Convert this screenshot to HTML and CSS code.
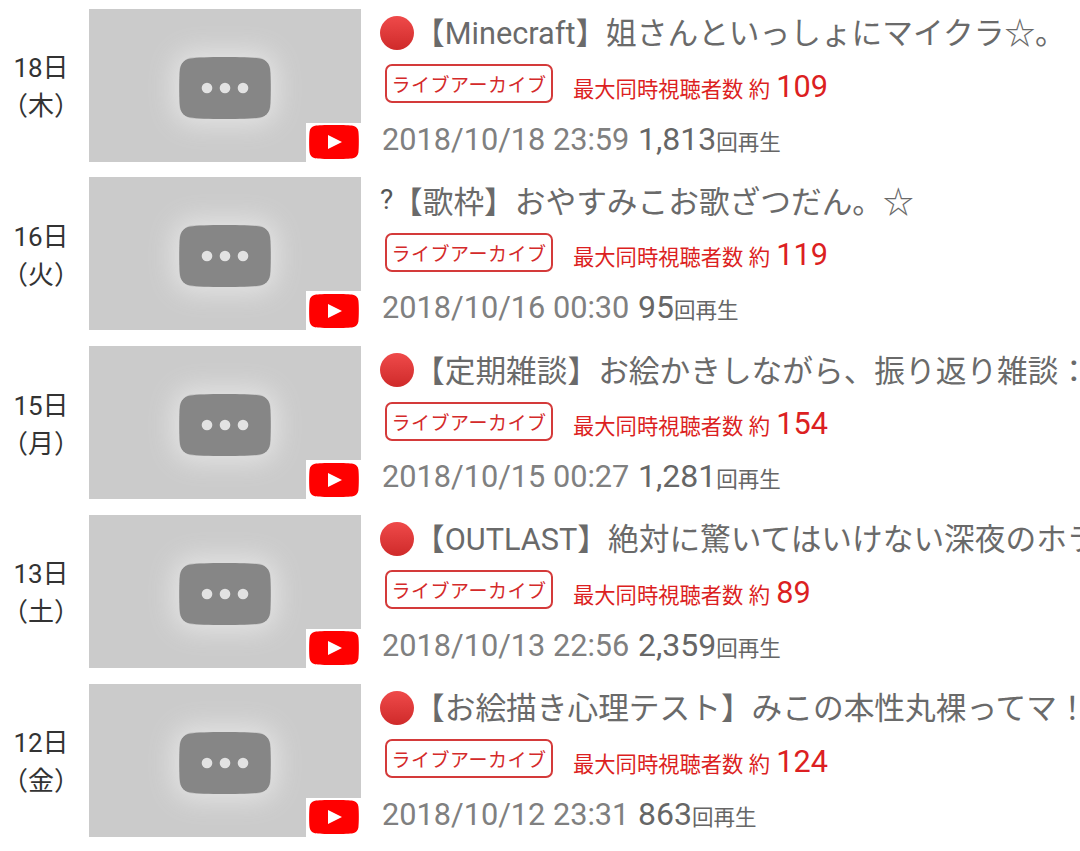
FILE: index.html
```html
<!DOCTYPE html>
<html lang="ja">
<head>
    <meta charset="UTF-8">
    <meta name="viewport" content="width=device-width, initial-scale=1.0">
    <title>ライブアーカイブ</title>
    <link rel="stylesheet" href="styles.css">
</head>

<body>
    <svg class="defs" width="0" height="0">
        <symbol id="ph" viewBox="0 0 92 62"><path d="M46 0C62 0 74 .5 81 1.5C87 2.5 90 6 91 12C92 20 92 42 91 50C90 56 87 59.5 81 60.5C74 61.5 62 62 46 62C30 62 18 61.5 11 60.5C5 59.5 2 56 1 50C0 42 0 20 1 12C2 6 5 2.5 11 1.5C18 .5 30 0 46 0Z" fill="#868686"/><circle cx="28" cy="31" r="5.3" fill="#e2e2e2"/><circle cx="46" cy="31" r="5.3" fill="#e2e2e2"/><circle cx="64" cy="31" r="5.3" fill="#e2e2e2"/></symbol>
        <symbol id="yt" viewBox="0 0 52 36"><path d="M26 1C36 1 42 1.3 45 1.8C48 2.4 50 4.4 50.4 7.5C51 12 51 24 50.4 28.5C50 31.6 48 33.6 45 34.2C42 34.7 36 35 26 35C16 35 10 34.7 7 34.2C4 33.6 2 31.6 1.600 28.5C1 24 1 12 1.600 7.500C2 4.400 4 2.400 7 1.800C10 1.300 16 1 26 1Z" fill="#f00"/><path d="M20 11L34 18L20 25Z" fill="#fff"/></symbol>
    </svg>
    <ul class="list">
        <li class="row">
            <div class="date">18日<span class="week">（木）</span></div>
            <div class="thumb">
                <svg class="play"><use href="#ph"/></svg>
                <span class="yt"><svg><use href="#yt"/></svg></span>
            </div>
            <div class="info">
                <p class="title"><span class="dot"></span>【Minecraft】姐さんといっしょにマイクラ☆。</p>
                <p class="meta"><span class="tag">ライブアーカイブ</span><span class="viewers">最大同時視聴者数 約 <b>109</b></span></p>
                <p class="stats">2018/10/18 23:59 <span class="count">1,813<small>回再生</small></span></p>
            </div>
        </li>
        <li class="row">
            <div class="date">16日<span class="week">（火）</span></div>
            <div class="thumb">
                <svg class="play"><use href="#ph"/></svg>
                <span class="yt"><svg><use href="#yt"/></svg></span>
            </div>
            <div class="info">
                <p class="title"><span class="q">?</span>【歌枠】おやすみこお歌ざつだん。☆</p>
                <p class="meta"><span class="tag">ライブアーカイブ</span><span class="viewers">最大同時視聴者数 約 <b>119</b></span></p>
                <p class="stats">2018/10/16 00:30 <span class="count">95<small>回再生</small></span></p>
            </div>
        </li>
        <li class="row">
            <div class="date">15日<span class="week">（月）</span></div>
            <div class="thumb">
                <svg class="play"><use href="#ph"/></svg>
                <span class="yt"><svg><use href="#yt"/></svg></span>
            </div>
            <div class="info">
                <p class="title"><span class="dot"></span>【定期雑談】お絵かきしながら、振り返り雑談：</p>
                <p class="meta"><span class="tag">ライブアーカイブ</span><span class="viewers">最大同時視聴者数 約 <b>154</b></span></p>
                <p class="stats">2018/10/15 00:27 <span class="count">1,281<small>回再生</small></span></p>
            </div>
        </li>
        <li class="row">
            <div class="date">13日<span class="week">（土）</span></div>
            <div class="thumb">
                <svg class="play"><use href="#ph"/></svg>
                <span class="yt"><svg><use href="#yt"/></svg></span>
            </div>
            <div class="info">
                <p class="title"><span class="dot"></span>【OUTLAST】絶対に驚いてはいけない深夜のホラー</p>
                <p class="meta"><span class="tag">ライブアーカイブ</span><span class="viewers">最大同時視聴者数 約 <b>89</b></span></p>
                <p class="stats">2018/10/13 22:56 <span class="count">2,359<small>回再生</small></span></p>
            </div>
        </li>
        <li class="row">
            <div class="date">12日<span class="week">（金）</span></div>
            <div class="thumb">
                <svg class="play"><use href="#ph"/></svg>
                <span class="yt"><svg><use href="#yt"/></svg></span>
            </div>
            <div class="info">
                <p class="title"><span class="dot"></span>【お絵描き心理テスト】みこの本性丸裸ってマ！</p>
                <p class="meta"><span class="tag">ライブアーカイブ</span><span class="viewers">最大同時視聴者数 約 <b>124</b></span></p>
                <p class="stats">2018/10/12 23:31 <span class="count">863<small>回再生</small></span></p>
            </div>
        </li>
    </ul>
</body>
</html>
```

FILE: styles.css
```css
*
{
    margin:0;
    padding:0;
    box-sizing:border-box;
    font-family:Roboto, 'Noto Sans CJK JP', sans-serif;
}
body
{
    background:#fff;
    overflow:hidden;
    height:851px;
}
.defs
{
    display:block;
    height:0;
}
.list
{
    list-style:none;
    padding-top:8.6px;
}
.row
{
    display:flex;
    height:168.75px;
    width:1080px;
    overflow:hidden;
}
.date
{
    width:82px;
    margin-right:7px;
    height:153px;
    padding-top:4px;
    display:flex;
    flex-direction:column;
    justify-content:center;
    align-items:center;
    font-size:26px;
    line-height:38px;
    color:#333;
    white-space:nowrap;
}
.thumb
{
    position:relative;
    flex:none;
    width:272px;
    height:153px;
    padding-top:5px;
    display:flex;
    justify-content:center;
    align-items:center;
    background:#cbcbcb;
}
.play
{
    width:92px;
    height:62px;
    border-radius:15px;
    box-shadow:0 0 26px 6px #e4e4e4;
    filter:blur(0.6px);
}
.yt
{
    position:absolute;
    right:0;
    bottom:0;
    width:55px;
    height:39px;
    background:#fff;
    display:flex;
    justify-content:center;
    align-items:center;
}
.yt svg
{
    width:52px;
    height:36px;
}
.info
{
    margin-left:19px;
    flex:1;
    min-width:0;
}
.title
{
    display:flex;
    align-items:center;
    height:44px;
    font-size:30.7px;
    color:#6a6a6a;
    white-space:nowrap;
}
.dot
{
    flex:none;
    width:34px;
    height:34px;
    margin-top:4px;
    border-radius:50%;
    background:linear-gradient(#ef4a4a,#cf2a2a);
}
.q
{
    font-size:28px;
    width:12px;
    color:#555;
}
.meta
{
    display:flex;
    align-items:center;
    height:46px;
    margin-top:8px;
    margin-left:5px;
    color:#dc1f22;
}
.tag
{
    border:2px solid #d43a3a;
    border-radius:7px;
    width:168px;
    height:39px;
    display:flex;
    justify-content:center;
    align-items:center;
    font-size:19px;
    letter-spacing:0.5px;
    color:#d42a2a;
}
.viewers
{
    margin-left:20px;
    margin-top:5px;
    font-size:21.3px;
    white-space:nowrap;
}
.viewers b
{
    font-weight:400;
    font-size:30.7px;
    margin-left:1px;
}
.stats
{
    margin-top:13px;
    margin-left:2px;
    font-size:30.7px;
    color:#808080;
    white-space:nowrap;
}
.count
{
    color:#666;
    font-size:32px;
    margin-left:1px;
}
.count small
{
    font-size:21.5px;
}
```
